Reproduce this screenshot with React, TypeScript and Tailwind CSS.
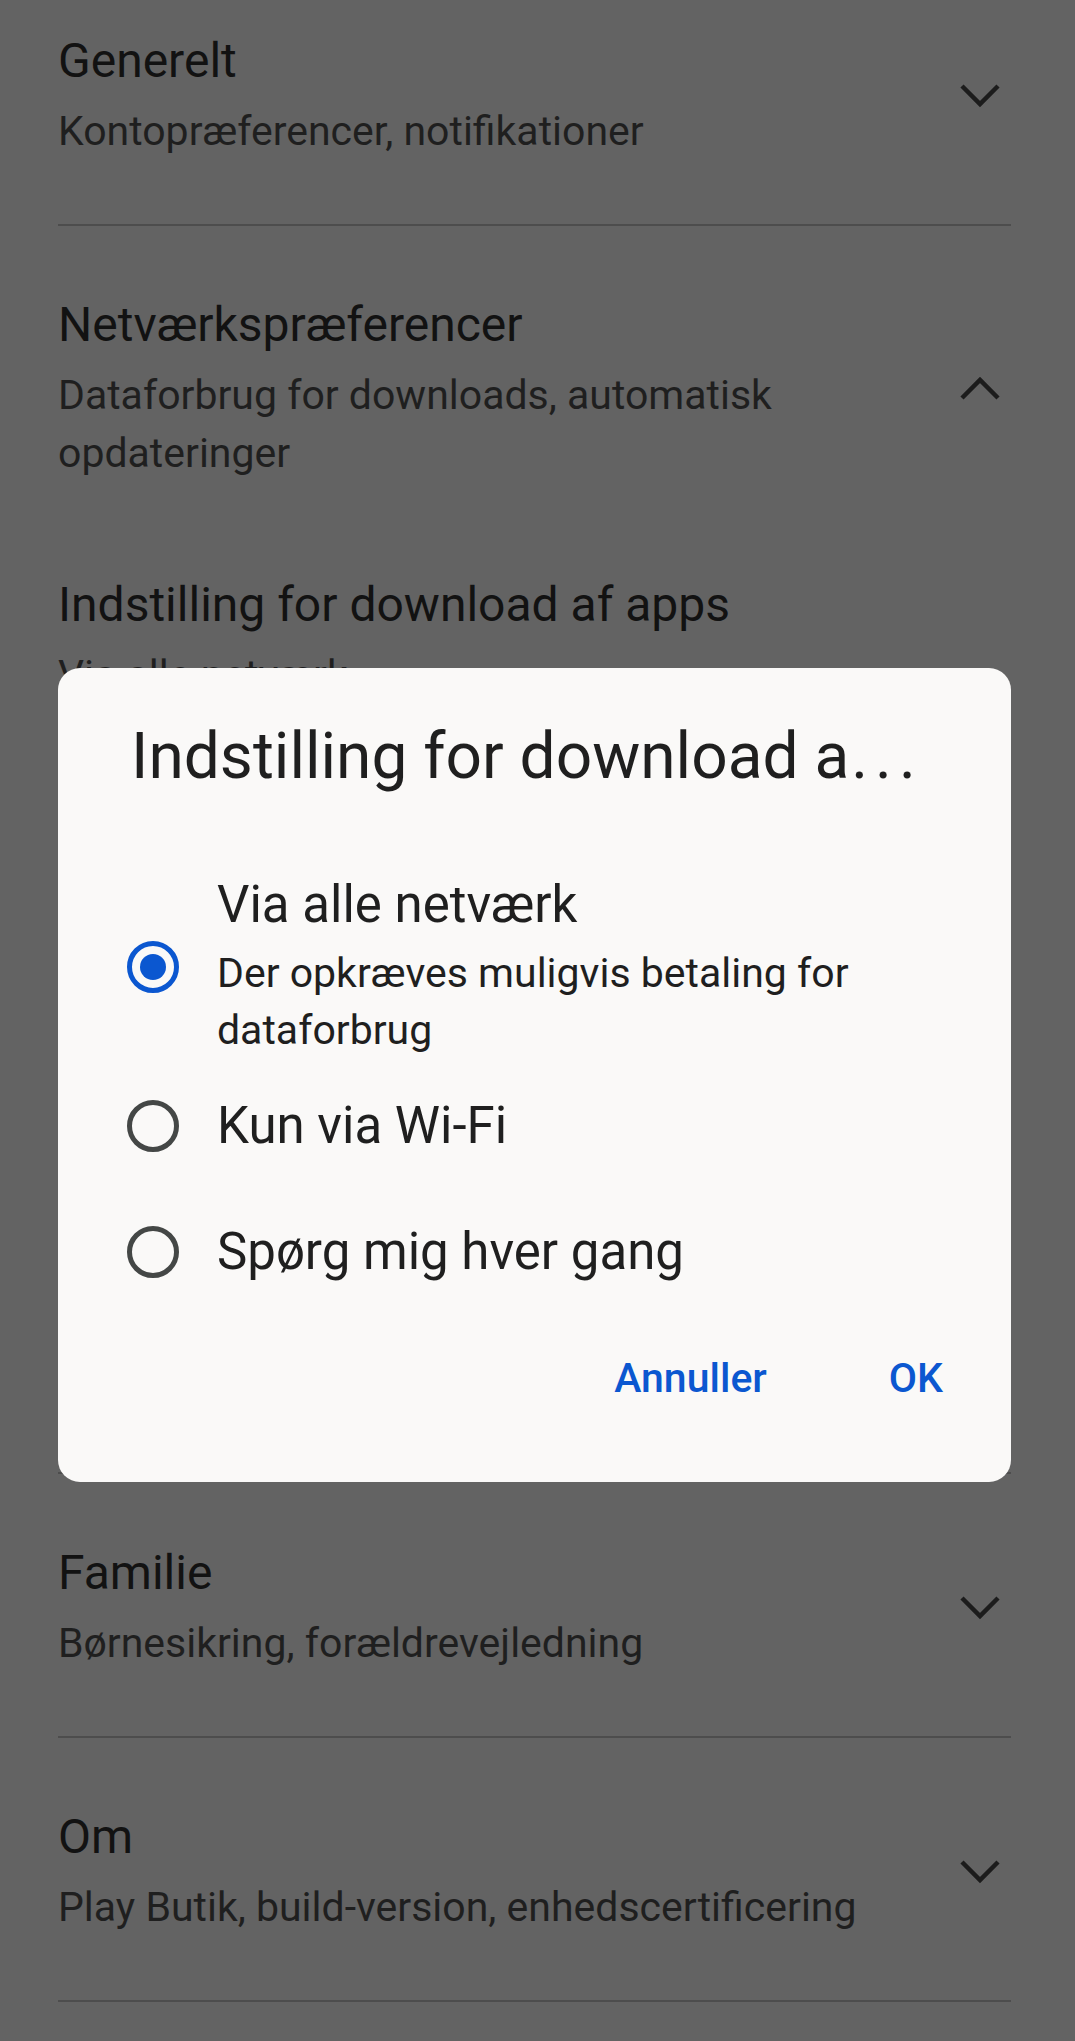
import React from 'react';

type Section = {
    title: string;
    subtitle: string;
    open?: boolean;
};

const Chevron = ({ up }: { up?: boolean }) => (
    <svg width="42" height="25" viewBox="0 0 42 25" className={up ? 'rotate-180' : ''}>
        <polyline points="3,3 21,21 39,3" fill="none" stroke="#1c1c1c" strokeWidth="4.5" />
    </svg>
);

const SectionHeader = ({ title, subtitle, open }: Section) => (
    <div className="flex items-center">
        <div className="flex-1 pr-[40px]">
            <div className="text-[48px] leading-[60px] text-[#121212]">{title}</div>
            <div className="mt-[11px] text-[41px] leading-[58px] text-[#1f1f1f]">{subtitle}</div>
        </div>
        <div className="w-[62px] flex justify-center">
            <Chevron up={open} />
        </div>
    </div>
);

const Divider = () => <div className="h-[2px] bg-[#4d4d4d]" />;

const Radio = ({ selected }: { selected?: boolean }) => (
    <div
        className={
            selected
                ? 'w-[52px] h-[52px] shrink-0 rounded-full border-[5px] border-[#0b57d0] flex items-center justify-center'
                : 'w-[52px] h-[52px] shrink-0 rounded-full border-[5px] border-[#444746]'
        }
    >
        {selected && <div className="w-[26px] h-[26px] rounded-full bg-[#0b57d0]" />}
    </div>
);

const options = [
    { label: 'Via alle netværk', desc: 'Der opkræves muligvis betaling for dataforbrug', selected: true },
    { label: 'Kun via Wi-Fi' },
    { label: 'Spørg mig hver gang' },
];

export default function App() {
    return (
        <div className="relative w-full min-h-[2041px] overflow-hidden bg-[#636363] font-['Roboto',sans-serif]">
            <div className="ml-[58px] w-[953px]">
                {/* list, scrolled a little */}
                <div className="pt-[31px] pb-[64px]">
                    <SectionHeader title="Generelt" subtitle="Kontopræferencer, notifikationer" />
                </div>
                <Divider />

                <div className="pt-[69px] pb-[768px]">
                    <SectionHeader
                        title="Netværkspræferencer"
                        subtitle="Dataforbrug for downloads, automatisk opdateringer"
                        open
                    />
                    <div className="mt-[93px]">
                        <div className="text-[48px] leading-[60px] text-[#121212]">Indstilling for download af apps</div>
                        <div className="mt-[11px] text-[41px] leading-[58px] text-[#1f1f1f]">Via alle netværk</div>
                    </div>
                </div>
                <Divider />

                <div className="pt-[69px] pb-[64px]">
                    <SectionHeader title="Familie" subtitle="Børnesikring, forældrevejledning" />
                </div>
                <Divider />

                <div className="pt-[69px] pb-[64px]">
                    <SectionHeader title="Om" subtitle="Play Butik, build-version, enhedscertificering" />
                </div>
                <Divider />
            </div>

            {/* dialog */}
            <div className="absolute left-[58px] top-[668px] w-[953px] rounded-[22px] bg-[#faf9f8] pt-[51px] pb-[80px]">
                <div className="pl-[73px] whitespace-nowrap text-[64px] leading-[76px] text-[#1f1f1f]">
                    Indstilling for download a<span className="ml-[2px] tracking-[7px]">...</span>
                </div>

                <div className="mt-[76px] pl-[69px] pr-[70px]">
                    {options.map((o, i) => (
                        <div key={i} className="flex items-center min-h-[126px] py-[4px]">
                            <Radio selected={o.selected} />
                            <div className="ml-[38px] flex-1">
                                <div className="text-[51px] leading-[60px] text-[#1f1f1f]">{o.label}</div>
                                {o.desc && (
                                    <div className="mt-[10px] text-[41px] leading-[57px] text-[#1f1f1f]">{o.desc}</div>
                                )}
                            </div>
                        </div>
                    ))}
                </div>

                <div className="mt-[39px] flex justify-end gap-[122px] pr-[68px] text-[41px] leading-[48px] font-medium text-[#0b57d0]">
                    <span>Annuller</span>
                    <span>OK</span>
                </div>
            </div>
        </div>
    );
}
